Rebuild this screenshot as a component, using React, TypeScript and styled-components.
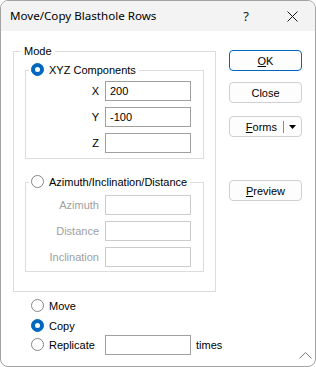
import React from "react";
import styled, { createGlobalStyle } from "styled-components";

const Global = createGlobalStyle`
  html, body { margin: 0; padding: 0; background: #ffffff; }
  body {
    font-family: "Liberation Sans", Arial, sans-serif;
    font-size: 11px;
    color: #000000;
  }
  * { box-sizing: border-box; }
`;

const Window = styled.div`
  position: relative;
  width: 316px;
  height: 367px;
  border: 1px solid #a3a3a3;
  border-radius: 8px;
  overflow: hidden;
  background: #ffffff;
  display: flex;
  flex-direction: column;
`;

const TitleBar = styled.div`
  flex: none;
  height: 30px;
  display: flex;
  align-items: center;
  background: #f3f3f3;
  padding-left: 9px;
`;

const Title = styled.div`
  flex: 1;
  line-height: 16px;
  font-family: "Noto Sans", "Open Sans", sans-serif;
  font-size: 11.6px;
`;

const CaptionButton = styled.div`
  width: 46px;
  height: 30px;
  display: flex;
  align-items: center;
  justify-content: center;
  font-family: "Noto Sans", "Open Sans", sans-serif;
  font-size: 13px;
  color: #1a1a1a;
`;

const Body = styled.div`
  flex: 1;
  display: flex;
`;

const LeftColumn = styled.div`
  flex: none;
  width: 215px;
  padding: 12px 0 0 12px;
  display: flex;
  flex-direction: column;
`;

const RightColumn = styled.div`
  padding: 19px 0 0 13px;
  display: flex;
  flex-direction: column;
`;

const GroupBox = styled.fieldset<{ $w: number; $pt: number; $pb: number; $ml?: number; $mt?: number }>`
  margin: ${(p) => p.$mt ?? 0}px 0 0 ${(p) => p.$ml ?? 0}px;
  padding: ${(p) => p.$pt}px 0 ${(p) => p.$pb}px 0;
  min-width: 0;
  width: ${(p) => p.$w}px;
  border: 1px solid #dcdcdc;
  display: flex;
  flex-direction: column;
`;

const Legend = styled.legend<{ $ml: number; $pl: number }>`
  margin-left: ${(p) => p.$ml}px;
  padding: 0 3px 0 ${(p) => p.$pl}px;
  height: 16px;
  line-height: 16px;
  display: flex;
  align-items: center;
`;

const RadioCircle = styled.span<{ $checked?: boolean }>`
  flex: none;
  width: 13px;
  height: 13px;
  border-radius: 50%;
  margin-right: 5px;
  margin-bottom: 1px;
  background: ${(p) => (p.$checked ? "#0067c0" : "#ffffff")};
  border: 1px solid ${(p) => (p.$checked ? "#0067c0" : "#858585")};
  display: flex;
  align-items: center;
  justify-content: center;
  &::after {
    content: "";
    display: ${(p) => (p.$checked ? "block" : "none")};
    width: 5px;
    height: 5px;
    border-radius: 50%;
    background: #ffffff;
  }
`;

const Rows = styled.div`
  display: flex;
  flex-direction: column;
  gap: 6px;
`;

const FieldRow = styled.div`
  display: flex;
  align-items: center;
  height: 20px;
`;

const FieldLabel = styled.span<{ $disabled?: boolean }>`
  width: 73px;
  margin-right: 6px;
  text-align: right;
  color: ${(p) => (p.$disabled ? "#a0a0a0" : "#000000")};
`;

const TextBox = styled.div<{ $disabled?: boolean }>`
  flex: none;
  width: 86px;
  height: 20px;
  border: 1px solid ${(p) => (p.$disabled ? "#cccccc" : "#a0a0a0")};
  background: #ffffff;
  padding-left: 4px;
  line-height: 18px;
  color: #000000;
`;

const OptionList = styled.div`
  margin-top: 3px;
  padding-left: 18px;
  display: flex;
  flex-direction: column;
`;

const OptionRow = styled.div<{ $h: number }>`
  height: ${(p) => p.$h}px;
  display: flex;
  align-items: center;
  white-space: nowrap;
`;

const OptionLabel = styled.span<{ $w?: number }>`
  flex: none;
  width: ${(p) => (p.$w ? `${p.$w}px` : "auto")};
`;

const Suffix = styled.span`
  margin-left: 5px;
`;

const Button = styled.div<{ $primary?: boolean; $mt: number }>`
  margin-top: ${(p) => p.$mt}px;
  width: 73px;
  height: 21px;
  border: 1px solid ${(p) => (p.$primary ? "#0067c0" : "#d0d0d0")};
  border-radius: 4px;
  background: #fdfdfd;
  display: flex;
  align-items: center;
  justify-content: center;
  line-height: 16px;
`;

const SplitMain = styled.span`
  flex: 1;
  text-align: right;
  padding-right: 6px;
`;

const SplitDivider = styled.span`
  width: 1px;
  height: 12px;
  background: #8a8a8a;
`;

const SplitArrow = styled.span`
  width: 17px;
  display: flex;
  align-items: center;
  justify-content: center;
`;

const Grip = styled.svg`
  position: absolute;
  right: 3px;
  bottom: 7px;
`;

export default function App() {
  return (
    <>
      <Global />
      <Window>
        <TitleBar>
          <Title>Move/Copy Blasthole Rows</Title>
          <CaptionButton>?</CaptionButton>
          <CaptionButton>
            <svg width="11" height="11" viewBox="0 0 11 11">
              <path d="M0.5 0.5 L10.5 10.5 M10.5 0.5 L0.5 10.5" stroke="#1a1a1a" strokeWidth="1" />
            </svg>
          </CaptionButton>
        </TitleBar>
        <Body>
          <LeftColumn>
            <GroupBox $w={203} $pt={0} $pb={19}>
              <Legend $ml={7} $pl={3}>Mode</Legend>
              <GroupBox $w={179} $pt={3} $pb={5} $ml={11} $mt={3}>
                <Legend $ml={3} $pl={2}>
                  <RadioCircle $checked />
                  XYZ Components
                </Legend>
                <Rows>
                  <FieldRow>
                    <FieldLabel>X</FieldLabel>
                    <TextBox>200</TextBox>
                  </FieldRow>
                  <FieldRow>
                    <FieldLabel>Y</FieldLabel>
                    <TextBox>-100</TextBox>
                  </FieldRow>
                  <FieldRow>
                    <FieldLabel>Z</FieldLabel>
                    <TextBox />
                  </FieldRow>
                </Rows>
              </GroupBox>
              <GroupBox $w={179} $pt={5} $pb={4} $ml={11} $mt={15}>
                <Legend $ml={3} $pl={2}>
                  <RadioCircle />
                  Azimuth/Inclination/Distance
                </Legend>
                <Rows>
                  <FieldRow>
                    <FieldLabel $disabled>Azimuth</FieldLabel>
                    <TextBox $disabled />
                  </FieldRow>
                  <FieldRow>
                    <FieldLabel $disabled>Distance</FieldLabel>
                    <TextBox $disabled />
                  </FieldRow>
                  <FieldRow>
                    <FieldLabel $disabled>Inclination</FieldLabel>
                    <TextBox $disabled />
                  </FieldRow>
                </Rows>
              </GroupBox>
            </GroupBox>
            <OptionList>
              <OptionRow $h={21}>
                <RadioCircle />
                <OptionLabel>Move</OptionLabel>
              </OptionRow>
              <OptionRow $h={19}>
                <RadioCircle $checked />
                <OptionLabel>Copy</OptionLabel>
              </OptionRow>
              <OptionRow $h={20}>
                <RadioCircle />
                <OptionLabel $w={56}>Replicate</OptionLabel>
                <TextBox />
                <Suffix>times</Suffix>
              </OptionRow>
            </OptionList>
          </LeftColumn>
          <RightColumn>
            <Button $primary $mt={0}>
              <span>
                <u>O</u>K
              </span>
            </Button>
            <Button $mt={11}>Close</Button>
            <Button $mt={13}>
              <SplitMain>
                <u>F</u>orms
              </SplitMain>
              <SplitDivider />
              <SplitArrow>
                <svg width="7" height="4" viewBox="0 0 7 4">
                  <path d="M0 0 L7 0 L3.5 4 Z" fill="#000000" />
                </svg>
              </SplitArrow>
            </Button>
            <Button $mt={43}>
              <span>
                <u>P</u>review
              </span>
            </Button>
          </RightColumn>
        </Body>
        <Grip width="13" height="7" viewBox="0 0 13 7">
          <path d="M0.5 6.5 L6.5 0.5 L12.5 6.5" stroke="#7a7a7a" strokeWidth="1" fill="none" />
        </Grip>
      </Window>
    </>
  );
}
